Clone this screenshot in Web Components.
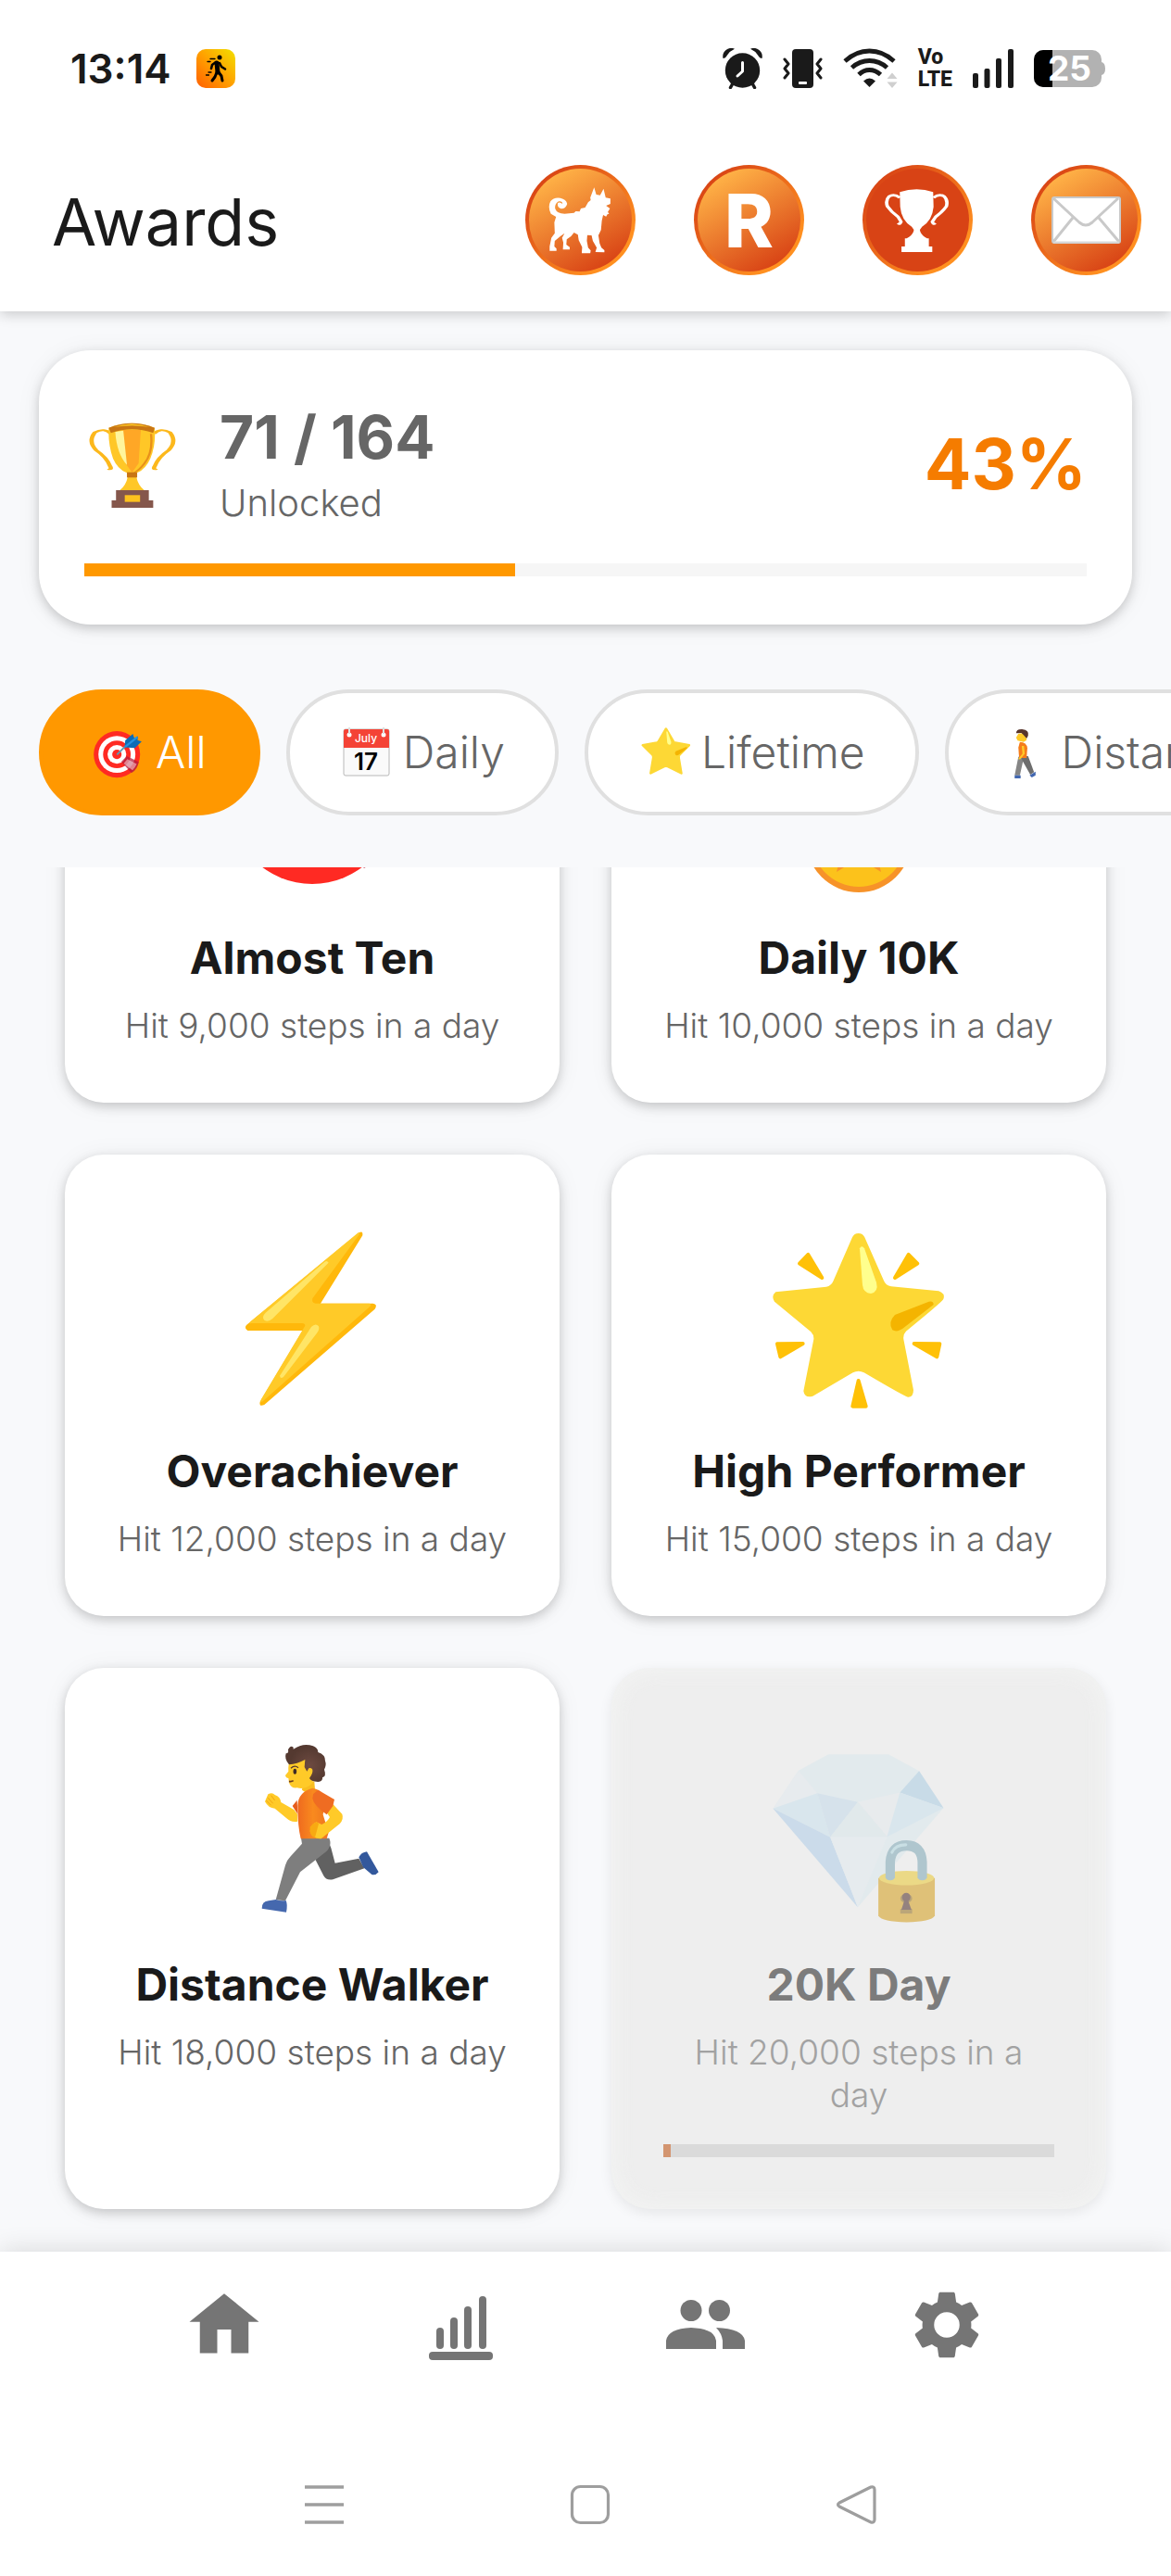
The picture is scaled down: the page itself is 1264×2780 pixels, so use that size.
<!DOCTYPE html>
<html lang="en">
<head>
<meta charset="utf-8">
<meta name="viewport" content="width=device-width, initial-scale=1">
<title>Awards</title>
<style>
    :root {
        --bg-color: #f8f9fb;
        --surface-color: #ffffff;
        --text-color: #1a1a1a;
        --text-color-light: #666666;
        --accent-color: #ff9800;
        --accent-color-dark: #f57c00;
        --line-color: #e0e0e0;
        --nav-color: #757575;
        --shadow-card: 0 4px 12px rgb(0 0 0 / 0.18), 0 2px 28px rgb(0 0 0 / 0.06);
    }

    body {
        margin: 0;
        background-color: var(--bg-color);
        color: var(--text-color);
        font-family: Inter, Roboto, "Liberation Sans", sans-serif;
    }
</style>
</head>
<body>

<template id="aw-app-template">
    <style>
        :host {
            display: flex;
            flex-direction: column;
            height: 100vh;
            overflow: hidden;
        }

        .top {
            position: relative;
            z-index: 1;
            background-color: var(--surface-color);
            box-shadow: 0 3px 14px rgb(0 0 0 / 0.2);
        }

        .head {
            padding: 42px 42px 0;
        }

        .chips {
            display: flex;
            gap: 28px;
            padding: 70px 42px 56px;
            overflow: hidden;
        }

        .scroll {
            flex: 1;
            min-height: 0;
            overflow-y: auto;
            scrollbar-width: none;
        }

        .grid {
            display: grid;
            grid-template-columns: 1fr 1fr;
            gap: 56px;
            padding: 56px 70px 46px;
        }

        .bottom {
            position: relative;
            z-index: 1;
            background-color: var(--surface-color);
            box-shadow: 0 0 28px rgb(0 0 0 / 0.14);
        }
    </style>
    <div class="top"><slot name="top"></slot></div>
    <div class="head"><slot name="summary"></slot></div>
    <div class="chips"><slot name="chip"></slot></div>
    <main class="scroll">
        <div class="grid"><slot></slot></div>
    </main>
    <div class="bottom"><slot name="bottom"></slot></div>
</template>

<template id="aw-status-template">
    <style>
        :host {
            display: flex;
            align-items: center;
            height: 148px;
            padding: 0 71px 0 76px;
        }

        time {
            font-size: 44px;
            font-weight: 600;
            margin-right: 27px;
        }

        .right {
            display: flex;
            align-items: center;
            gap: 22px;
            margin-left: auto;
        }

        .volte {
            font-family: Roboto, sans-serif;
            font-size: 23px;
            font-weight: 800;
            line-height: 24px;
        }

        .battery {
            display: grid;
            place-items: center;

            aw-icon, span {
                grid-area: 1 / 1;
            }

            span {
                z-index: 1;
                color: #fff;
                font-size: 37px;
                font-weight: 700;
                line-height: 40px;
            }
        }
    </style>
    <time>13:14</time>
    <aw-icon name="app" w="42" h="42"></aw-icon>
    <div class="right">
        <aw-icon name="alarm" w="43" h="44"></aw-icon>
        <aw-icon name="vibrate" w="43" h="44"></aw-icon>
        <aw-icon name="wifi" w="59" h="44"></aw-icon>
        <div class="volte">Vo<br>LTE</div>
        <aw-icon name="signal" w="44" h="44"></aw-icon>
        <div class="battery">
            <aw-icon name="battery" w="77" h="40"></aw-icon>
            <span>25</span>
        </div>
    </div>
</template>

<template id="aw-header-template">
    <style>
        :host {
            display: flex;
            align-items: center;
            justify-content: space-between;
            height: 179px;
            padding: 0 32px 9px 56px;
        }

        h1 {
            margin: 4px 0 0;
            font-size: 70px;
            font-weight: 400;
            line-height: 84px;
        }

        .actions {
            display: flex;
            gap: 63px;
        }
    </style>
    <h1><slot></slot></h1>
    <div class="actions"><slot name="action"></slot></div>
</template>

<template id="aw-round-button-template">
    <style>
        :host {
            display: block;
        }

        button {
            box-sizing: border-box;
            display: grid;
            place-items: center;
            width: 119px;
            height: 119px;
            padding: 0;
            border: 4px solid transparent;
            border-radius: 50%;
            background:
                linear-gradient(150deg, #ffb347 12%, #d84315 88%) padding-box,
                linear-gradient(135deg, #d84315 12%, #ff9020 80%) border-box;
            color: #fff;
            font-family: inherit;
            font-size: 80px;
            font-weight: 800;
            line-height: 80px;
        }

        :host([active]) button {
            background:
                linear-gradient(#d84315, #d84315) padding-box,
                linear-gradient(135deg, #d84315 12%, #ff9020 80%) border-box;
        }
    </style>
    <button type="button"><slot></slot></button>
</template>

<template id="aw-progress-template">
    <style>
        :host {
            display: block;
            height: 14px;
            background-color: var(--track-color, #f6f6f6);
        }

        div {
            height: 100%;
            background-color: var(--fill-color, var(--accent-color));
        }
    </style>
    <div></div>
</template>

<template id="aw-summary-template">
    <style>
        :host {
            display: block;
            padding: 56px 49px 52px;
            border-radius: 56px;
            background-color: var(--surface-color);
            box-shadow: var(--shadow-card);
        }

        .row {
            display: flex;
            align-items: center;
            gap: 42px;
            margin-bottom: 40px;
        }

        .count {
            color: var(--text-color-light);
            font-size: 64px;
            font-weight: 700;
            line-height: 76px;
        }

        .label {
            margin-top: 8px;
            color: var(--text-color-light);
            font-size: 40px;
            font-weight: 300;
            line-height: 50px;
        }

        .percent {
            margin-left: auto;
            color: var(--accent-color-dark);
            font-size: 75px;
            font-weight: 700;
            line-height: 80px;
        }
    </style>
    <div class="row">
        <aw-icon name="trophy" w="104" h="104"></aw-icon>
        <div>
            <div class="count"><slot name="count"></slot></div>
            <div class="label"><slot name="label"></slot></div>
        </div>
        <div class="percent"><slot name="percent"></slot></div>
    </div>
    <aw-progress value="43"></aw-progress>
</template>

<template id="aw-chip-template">
    <style>
        :host {
            display: block;
            flex: none;
        }

        button {
            box-sizing: border-box;
            display: flex;
            align-items: center;
            gap: 12px;
            height: 136px;
            padding: 0 54px;
            border: 4px solid var(--line-color);
            border-radius: 68px;
            background-color: var(--surface-color);
            color: var(--text-color-light);
            font-family: inherit;
            font-size: 48px;
            font-weight: 300;
            line-height: 56px;
            white-space: nowrap;
        }

        :host([selected]) button {
            border-color: var(--accent-color);
            background-color: var(--accent-color);
            color: #fff;
        }
    </style>
    <button type="button"><aw-icon w="56" h="56"></aw-icon><slot></slot></button>
</template>

<template id="aw-award-template">
    <style>
        :host {
            display: block;
            padding: 56px;
            border-radius: 42px;
            background-color: var(--surface-color);
            box-shadow: var(--shadow-card);
            text-align: center;
        }

        :host([locked]) {
            background-color: #eeeeee;
            box-shadow:
                inset 0 0 28px rgb(248 250 248 / 0.6),
                0 4px 14px rgb(0 0 0 / 0.08);
            --track-color: #dadada;
            --fill-color: #d39570;
        }

        aw-icon {
            margin: 0 auto 16px;
        }

        h2 {
            margin: 0 0 20px;
            font-size: 48px;
            font-weight: 700;
            line-height: 60px;
        }

        p {
            margin: 0 0 4px;
            color: var(--text-color-light);
            font-size: 37px;
            font-weight: 300;
            line-height: 46px;
        }

        :host([locked]) h2 {
            color: #7c7c7c;
        }

        :host([locked]) p {
            color: #a2a2a2;
        }

        article {
            display: flow-root;
        }

        aw-progress {
            margin-top: 30px;
        }
    </style>
    <article>
        <aw-icon w="240" h="240"></aw-icon>
        <h2><slot name="title"></slot></h2>
        <p><slot></slot></p>
    </article>
</template>

<template id="aw-nav-template">
    <style>
        :host {
            display: block;
        }

        nav {
            display: flex;
            justify-content: center;
            padding-bottom: 38px;
        }

        a {
            display: grid;
            place-items: center;
            width: 260px;
            height: 158px;
            color: var(--nav-color);
        }

        .system {
            display: flex;
            justify-content: center;
            padding-left: 10px;
        }

        .system button {
            display: grid;
            place-items: center;
            width: 287px;
            height: 154px;
            padding: 0;
            border: 0;
            background: none;
            color: #9e9e9e;
        }
    </style>
    <nav>
        <a href="#home" aria-label="Home"><aw-icon name="home" w="90" h="90"></aw-icon></a>
        <a href="#stats" aria-label="Stats"><aw-icon name="stats" w="90" h="90"></aw-icon></a>
        <a href="#friends" aria-label="Friends"><aw-icon name="people" w="90" h="90"></aw-icon></a>
        <a href="#settings" aria-label="Settings"><aw-icon name="settings" w="88" h="88"></aw-icon></a>
    </nav>
    <div class="system">
        <button type="button" aria-label="Recent apps"><aw-icon name="recent" w="44" h="44"></aw-icon></button>
        <button type="button" aria-label="Home screen"><aw-icon name="square" w="44" h="44"></aw-icon></button>
        <button type="button" aria-label="Back"><aw-icon name="back" w="44" h="44"></aw-icon></button>
    </div>
</template>

<aw-app>
    <aw-status slot="top"></aw-status>
    <aw-header slot="top">
        Awards
        <aw-round-button slot="action" label="Pet"><aw-icon name="dog" w="111" h="111"></aw-icon></aw-round-button>
        <aw-round-button slot="action" label="R">R</aw-round-button>
        <aw-round-button slot="action" label="Awards" active><aw-icon name="cup" w="111" h="111"></aw-icon></aw-round-button>
        <aw-round-button slot="action" label="Messages"><aw-icon name="mail" w="111" h="111"></aw-icon></aw-round-button>
    </aw-header>

    <aw-summary slot="summary">
        <span slot="count">71 / 164</span>
        <span slot="label">Unlocked</span>
        <span slot="percent">43%</span>
    </aw-summary>

    <aw-chip slot="chip" icon="target-small" selected>All</aw-chip>
    <aw-chip slot="chip" icon="calendar">Daily</aw-chip>
    <aw-chip slot="chip" icon="star">Lifetime</aw-chip>
    <aw-chip slot="chip" icon="walker">Distance</aw-chip>

    <aw-award icon="target"><span slot="title">Almost Ten</span>Hit 9,000 steps in a day</aw-award>
    <aw-award icon="medal"><span slot="title">Daily 10K</span>Hit 10,000 steps in a day</aw-award>
    <aw-award icon="bolt"><span slot="title">Overachiever</span>Hit 12,000 steps in a day</aw-award>
    <aw-award icon="glow"><span slot="title">High Performer</span>Hit 15,000 steps in a day</aw-award>
    <aw-award icon="runner"><span slot="title">Distance Walker</span>Hit 18,000 steps in a day</aw-award>
    <aw-award icon="diamond" locked progress="2"><span slot="title">20K Day</span>Hit 20,000 steps in a day</aw-award>

    <aw-nav slot="bottom"></aw-nav>
</aw-app>

<script type="module">
    const TARGET = `
        <circle cx="120" cy="117" r="89" fill="#ff2a23"/>
        <circle cx="120" cy="117" r="71" fill="#fff"/>
        <circle cx="120" cy="117" r="53" fill="#ff2a23"/>
        <circle cx="120" cy="117" r="36" fill="#fff"/>
        <circle cx="120" cy="117" r="18" fill="#ff2a23"/>
        <path d="M137 145 L158 124 L204 146 Q199 176 176 189 Z" fill="#b71c3c" opacity=".75"/>
        <path d="M146 152 L160 135 L196 154 Q190 168 180 178 Z" fill="#fff" opacity=".45"/>
        <path d="M122 116 L168 71" stroke="#5f9bb5" stroke-width="7" stroke-linecap="round"/>
        <path d="M150 90 L152 63 L181 38 L187 55 L201 47 L199 62 L215 68 L189 93 Z" fill="#0c6cb5"/>
        <path d="M152 88 L199 50" stroke="#2493e0" stroke-width="8"/>`;

    // each entry: [viewBox, markup]
    const ICONS = {
        "app": ["0 0 42 42", `
            <defs><linearGradient id="g" x1="0" y1="1" x2="1" y2="0">
                <stop stop-color="#ff5f00"/><stop offset=".5" stop-color="#ffa000"/><stop offset="1" stop-color="#f2e000"/>
            </linearGradient></defs>
            <rect width="42" height="42" rx="10" fill="url(#g)"/>
            <g stroke="#000" stroke-linecap="round" stroke-linejoin="round" fill="none">
                <circle cx="25" cy="9" r="2.500" fill="#000" stroke="none"/>
                <path d="M22 15 L23 25" stroke-width="5"/>
                <path d="M21 14 L17 17 L16 21 M25 15 L27 19 L31 21.500" stroke-width="2.600"/>
                <path d="M22 25 L20 30 L17 34 M24 25 L27 29 L28 34" stroke-width="3"/>
                <path d="M15 10.500h5M12 13.500h3M13 25h3M10.500 28h3" stroke-width="1.300"/>
            </g>`],
        "alarm": ["0 0 43 44", `
            <g fill="#1a1a1a"><circle cx="21.500" cy="24" r="18.700"/>
            <path d="M0.500 11 A9 9 0 0 1 13 .8 Q8 3 5 7.500 Q3 11 0.500 11ZM42.500 11 A9 9 0 0 0 30 .8 Q35 3 38 7.500 Q40 11 42.500 11Z"/></g>
            <path d="M11 38 L8.500 42.500 M32 38 L34.500 42.500" stroke="#1a1a1a" stroke-width="3.500" stroke-linecap="round"/>
            <path d="M21.500 15.500V25 L16 30" fill="none" stroke="#fff" stroke-width="3" stroke-linecap="round" stroke-linejoin="round"/>`],
        "vibrate": ["0 0 43 44", `
            <rect x="10" y="1" width="23" height="42" rx="4" fill="#1a1a1a"/>
            <rect x="17" y="36" width="9" height="3" rx="1" fill="#fff"/>
            <path d="M2 12 L6 17 L2 22 L6 27 L2 32 M41 12 L37 17 L41 22 L37 27 L41 32" fill="none" stroke="#1a1a1a" stroke-width="3" stroke-linecap="round" stroke-linejoin="round"/>`],
        "wifi": ["0 0 59 44", `
            <g fill="none" stroke="#1a1a1a" stroke-width="4.800">
                <path d="M2 14 Q14 3 28.500 3 Q43 3 55 14M9.500 21 Q18 13.500 28.500 13.500 Q39 13.500 47.500 21M17 28.500 Q22 23.500 28.500 23.500 Q35 23.500 40.500 28.500"/>
            </g>
            <path d="M22 35.500 Q28.500 29.500 35 35.500 L28.500 42Z" fill="#1a1a1a"/>
            <path d="M47.500 33 L53 26.500 L58.500 33ZM47.500 36.500 L53 43 L58.500 36.500Z" fill="#cfcfcf"/>`],
        "signal": ["0 0 44 44", `
            <g fill="#1a1a1a"><rect y="27" width="6" height="16" rx="2"/><rect x="12.500" y="22" width="6" height="21" rx="2"/>
            <rect x="25" y="11" width="6" height="32" rx="2"/><rect x="38" y="1" width="6" height="42" rx="2"/></g>`],
        "battery": ["0 0 77 40", `
            <defs><clipPath id="c"><rect width="73" height="40" rx="10"/></clipPath></defs>
            <g clip-path="url(#c)"><rect width="73" height="40" fill="#b2b2b2"/><rect width="20" height="40" fill="#000"/></g>
            <path d="M73 13 Q77 14 77 20 Q77 26 73 27Z" fill="#b2b2b2"/>`],
        "dog": ["8 8 111 111", `
            <path transform="translate(-22.800 -14) scale(.4617 .3333)" fill="#fff" d="M219 127 L224 150 L233 152 L241 131 L246 160 L257 163 L257 180 L247 186 L256 195 L251 206
            L254 212 L250 214 L247 221 L240 216 L237 235 L235 265 L229 282 L232 308 L236 322 L243 330 L243 337 L222 336 L225 322 L216 300 L213 282 L203 281
            L202 300 L205 322 L211 331 L210 340 L190 340 L191 320 L183 298 L181 280 L172 273 L165 285 L155 295 L154 312 L162 320 L162 328 L146 328 L147 305
            L144 290 L150 275 L140 285 L127 300 L126 318 L131 325 L131 332 L115 332 L115 318 L119 290 L127 275 L126 240 L130 222 L118 212
            Q110 190 117 172 Q124 158 140 161 Q154 165 156 180 Q153 196 142 196 Q132 192 134 178 Q138 172 145 180 Q145 170 136 172 Q126 180 128 196
            Q132 212 150 212 L172 209 L176 204 L185 205 L188 195 L198 192 L205 175 L211 168 L210 160Z"/>`],
        "cup": ["8 8 111 111", `
            <g transform="translate(-387 -14) scale(.4617 .3333)" fill="#fff">
                <path d="M934 142 Q974 124 1012 142 L1013 190 Q1010 235 986 254 L981 264 Q982 280 998 292 L1002 292 L1002 318 L1010 318 L1010 336 L938 336 L938 318 L946 318 L946 292 L950 292 Q966 280 967 264 L962 254 Q938 235 935 190Z"/>
                <path d="M934 160 Q921 146 909 156 Q900 168 905 188 Q914 206 930 222 L937 238 Q935 248 930 242 M1013 160 Q1026 146 1038 156 Q1047 168 1043 188 Q1034 206 1018 222 L1010 238 Q1012 248 1017 242" fill="none" stroke="#fff" stroke-width="8"/>
            </g>`],
        "mail": ["8 8 111 111", `
            <rect x="27" y="39" width="73" height="49" rx="2" fill="#fff" stroke="#c9c9c9" stroke-width="2"/>
            <path d="M28 40 L56 66 Q63 72 70 66 L98 40 M28 87 L49 61 M99 87 L77 61" fill="none" stroke="#c9c9c9" stroke-width="3"/>
            <path d="M28 87.500 H99" stroke="#d8d8d8" stroke-width="2"/>`],
        "trophy": ["0 0 104 104", `
            <g transform="translate(-61 -89) scale(.787 .3333)">
                <path d="M114 324 Q105 304 92 320 Q82 350 94 378 Q108 400 113 430 Q116 442 110 438 M173 324 Q182 304 195 320 Q205 350 193 378 Q179 400 174 430 Q171 442 177 438" fill="none" stroke="#fcb81c" stroke-width="6"/>
                <path d="M111 305 Q143 275 174 305 Q176 360 168 405 Q160 448 143 456 Q125 448 117 405 Q110 360 111 305Z" fill="#ffc727"/>
                <path d="M130 312 L155 312 L152 420 L143 450 L134 420Z" fill="#ffa726"/>
                <path d="M120 318 L131 314 L136 425 Q122 390 120 318Z" fill="#fff59d"/>
                <path d="M111 305 Q143 275 174 305 L172 322 Q143 298 114 322Z" fill="#c87514"/>
                <path d="M118 303 Q143 282 167 303 Q143 292 118 303Z" fill="#ffca28"/>
                <path d="M169 325 Q172 385 160 420 Q153 442 146 450" fill="none" stroke="#e8901a" stroke-width="3"/>
                <path d="M137 464 H149 Q151 490 160 508 H126 Q135 490 137 464Z" fill="#ffc727"/>
                <rect x="136" y="449" width="14" height="17" fill="#c87514"/>
                <path d="M121 507 H166 V540 H172 V564 H115 V540 H121Z" fill="#85574c"/>
                <rect x="133" y="523" width="21" height="22" fill="#fdc21e"/>
            </g>`],
        "target": ["0 0 240 240", TARGET],
        "target-small": ["27 10 199 199", TARGET],
        "calendar": ["0 0 56 56", `
            <rect x="4" y="3" width="49" height="50" rx="2" fill="#fafafa" stroke="#b8b8b8"/>
            <path d="M4 23V5q0-2 2-2h45q2 0 2 2v18z" fill="#f44336"/>
            <circle cx="10" cy="9" r="2.500" fill="#fff"/><circle cx="47" cy="9" r="2.500" fill="#fff"/>
            <path d="M10 1v7M47 1v7" stroke="#e0e0e0" stroke-width="2"/>
            <text x="28" y="17" font-size="12" font-weight="500" text-anchor="middle" fill="#fff">July</text>
            <text x="28" y="47" font-size="26" font-weight="600" text-anchor="middle" fill="#000">17</text>`],
        "star": ["14 24 198 198", `
            <g transform="translate(-7 -2) scale(.3333)">
                <path d="M380 104 L464 246 Q470 262 488 264 L646 292 L534 404 Q524 418 526 434 L556 614 L400 535 Q380 526 360 535 L204 614 L234 434 Q234 418 226 404 L114 292 L274 264 Q290 260 296 246Z" fill="#fdd835" stroke="#fdd835" stroke-width="26" stroke-linejoin="round"/>
                <path d="M384 138 Q392 130 400 142 L438 252 Q444 282 420 288 Q396 284 394 260Z" fill="#ffff8d"/>
                <path d="M492 362 L608 314 Q624 310 622 326 L530 400 Q506 418 488 402 Q474 380 492 362Z" fill="#f4b400"/>
            </g>`],
        "walker": ["0 0 56 56", `
            <g transform="translate(-1071 -64) scale(.8061 .3333)">
                <path d="M1355 290 L1350 350 H1357 L1363 285Z" fill="#858585"/>
                <path d="M1358 288 L1368 288 L1376 340 L1371 348 L1361 305Z" fill="#6d6d6d"/>
                <path d="M1350 350 H1358 V363 H1350ZM1370 350 L1378 338 L1378 350 L1373 357Z" fill="#4267b0"/>
                <path d="M1355 215 L1365 213 L1366 236 L1362 242 L1354 238 L1352 228Z" fill="#ffca28"/>
                <path d="M1357 242 Q1366 242 1367 262 L1366 294 H1356 L1355 260Z" fill="#f57c1a"/>
                <path d="M1361 255 L1362 280 L1356 298" fill="none" stroke="#ffca28" stroke-width="3"/>
                <path d="M1352 214 Q1352 200 1360 201 Q1370 204 1368 222 L1366 231 L1362 220 L1359 213Z" fill="#59362c"/>
            </g>`],
        "medal": ["0 0 240 240", `
            <path d="M62 0 H110 L132 96 L104 112Z" fill="#176cc7"/>
            <path d="M178 0 H130 L108 96 L136 112Z" fill="#2a8df0"/>
            <circle cx="120" cy="158" r="57" fill="#f79329"/>
            <circle cx="120" cy="158" r="51" fill="#fcc21b"/>
            <path d="M120 120 L131 145 L158 147 L137 165 L144 193 L120 178 L96 193 L103 165 L82 147 L109 145Z" fill="#f79329"/>`],
        "bolt": ["0 0 240 240", `
            <g transform="translate(13 -2) scale(.3333)">
                <path d="M474 90 Q486 84 484 100 L348 320 H518 Q534 322 524 338 L166 648 Q148 656 152 638 L290 408 H112 Q100 400 108 390Z" fill="#ffb80b"/>
                <path d="M470 91 Q476 88 474 96 L322 304 Q318 318 332 320 H506 Q514 322 508 330 L162 636 Q150 644 156 630 L298 392 Q298 384 288 384 H124 Q112 388 122 378Z" fill="#ffca28"/>
                <path d="M358 188 Q368 178 374 188 L192 370 Q178 382 166 374 Q156 364 170 350Z" fill="#ffe566"/>
                <path d="M318 396 Q332 382 342 394 Q346 404 336 416 L228 558 Q218 566 216 554Z" fill="#ffe566"/>
            </g>`],
        "glow": ["0 0 240 240", `
            <g transform="translate(-7 -2) scale(.3333)">
                <path d="M380 93 Q394 93 400 106 L462 246 Q468 262 486 265 L640 280 Q662 288 655 306 Q652 314 534 410 Q524 420 526 436 L558 600 Q558 624 540 623 Q532 623 398 544 Q380 534 362 544 L232 620 Q206 628 202 604 L235 436 Q236 422 226 412 L108 314 Q96 296 112 283 L276 266 Q292 262 298 248 L360 106 Q366 93 380 93Z" fill="#fdd835"/>
                <path d="M384 142 Q390 130 399 142 L438 252 Q446 282 420 288 Q396 286 393 260Z" fill="#ffff8d"/>
                <path d="M498 357 L608 314 Q624 311 623 324 L530 396 Q506 416 490 406 Q474 382 498 357Z" fill="#f4b400"/>
                <g fill="#ffc107" stroke="#ffc107" stroke-width="12" stroke-linejoin="round">
                    <path d="M217 162 L262 237 L189 191ZM542 162 L498 237 L571 191ZM117 451 L200 450 L127 493ZM643 451 L560 450 L634 493ZM380 570 L361 653 H404Z"/>
                </g>
            </g>`],
        "runner": ["0 0 240 240", `
            <defs>
                <linearGradient id="s" x1="0" x2="1"><stop stop-color="#ef6a1f"/><stop offset=".5" stop-color="#f98a1e"/><stop offset="1" stop-color="#ee741f"/></linearGradient>
                <radialGradient id="h" cx=".6" cy=".55"><stop stop-color="#6d4a41"/><stop offset="1" stop-color="#543930"/></radialGradient>
            </defs>
            <g transform="translate(33 5) scale(.3333)">
                <path d="M270 435 L312 375 L322 400 L335 449 L412 434 L430 466 L328 502 Q306 506 298 490Z" fill="#616161"/>
                <path d="M412 430 Q420 414 438 412 L476 478 Q466 490 454 486 L426 462Z" fill="#33589c"/>
                <path d="M225 368 H316 Q326 392 308 410 L222 478 L174 571 L143 568 L174 456 Q178 440 190 428 L228 386Z" fill="#7e7e7e"/>
                <path d="M143 567 Q160 573 176 570 Q182 582 177 608 L98 596 Q98 572 120 571Z" fill="#4568ae"/>
                <path d="M118 226 Q132 218 140 228 Q158 234 160 252 L202 276 L213 290 L214 314 Q192 318 178 304 L140 272 Q120 272 108 250Z" fill="#ffca28"/>
                <path d="M112 246 L128 262 M118 238 L134 256 M128 230 L140 246" stroke="#f2a413" stroke-width="3"/>
                <path d="M212 245 L197 264 L214 290Z" fill="#e65c1b"/>
                <path d="M230 190 L268 184 L270 212 L248 226 L228 212Z" fill="#f9bd20"/>
                <path d="M214 262 Q216 218 262 206 Q300 212 304 250 L296 292 L314 350 L308 370 H224 Q214 330 214 262Z" fill="url(#s)"/>
                <path d="M328 258 L358 290 Q364 306 350 322 L290 370 Q262 372 254 346 Q256 324 274 316 L292 324 Q312 314 318 300 L306 282Z" fill="#ffca28"/>
                <path d="M254 332 Q262 320 276 316 L282 322 L270 366 Q256 362 254 346Z" fill="#f8a912"/>
                <path d="M264 226 L280 212 L333 243 L328 264 L308 292 Q266 262 262 240Z" fill="#ef6c22"/>
                <path d="M190 112 Q182 134 184 152 L174 165 Q176 174 184 174 L186 188 Q192 208 212 205 Q240 212 262 190 L276 130 L248 96 L200 98Z" fill="#ffca28"/>
                <path d="M186 130 Q170 112 176 94 Q186 94 183 82 Q190 66 200 74 L200 80 Q232 58 264 70 Q280 76 280 90 Q304 98 303 118 Q308 132 300 146 Q308 168 294 172 Q296 184 280 186 Q256 184 252 174 Q264 158 262 146 Q258 138 250 142 L244 152 L236 138 L238 114 Q212 128 186 130Z" fill="url(#h)"/>
                <ellipse cx="205" cy="152" rx="5.500" ry="9" fill="#3e2b26"/>
                <path d="M192 142 Q204 130 216 140" fill="none" stroke="#543930" stroke-width="4"/>
                <path d="M186 184 Q194 186 200 182" fill="none" stroke="#6d3a20" stroke-width="5"/>
            </g>`],
        "diamond": ["0 0 240 240", `
            <g transform="translate(-167 -75) scale(.3762 .4082)">
                <path d="M517 418 L590 318 L676 275 H848 L936 319 L1006 417 L760 679Z" fill="#e2eaed"/>
                <path d="M517 418 L590 318 L644 378Z" fill="#e7ebee"/>
                <path d="M517 418 L644 378 L681 494Z" fill="#d9e6ed"/>
                <path d="M644 378 L760 401 L681 494Z" fill="#d6e2eb"/>
                <path d="M760 401 L881 376 L844 493Z" fill="#e8ebed"/>
                <path d="M760 401 L844 493 H681Z" fill="#e1e9eb"/>
                <path d="M936 319 L1006 417 L881 376Z" fill="#c8dbe7"/>
                <path d="M881 376 L1006 417 L844 493Z" fill="#d9e6ed"/>
                <path d="M517 418 L681 494 L760 679Z" fill="#cbdbea"/>
                <path d="M681 494 H844 L760 679Z" fill="#e6ebee"/>
                <path d="M819 602 V702 Q830 718 900 719 Q970 718 981 702 V602Z" fill="#dfc178"/>
                <ellipse cx="900" cy="602" rx="79" ry="19" fill="#ebd986"/>
                <path d="M853 602 V560 Q856 516 900 516 Q943 516 945 560 V602" fill="none" stroke="#afc6ce" stroke-width="27"/>
                <path d="M840 600 h26 q-2 8-13 8 t-13-8zM932 600 h26 q-2 8-13 8 t-13-8z" fill="#afc6ce"/>
                <path d="M858 534 Q868 514 898 514" fill="none" stroke="#c9dfe4" stroke-width="8" stroke-linecap="round"/>
                <path d="M882 684 h34 v12 h-34z" fill="#bba679"/>
                <ellipse cx="899" cy="656" rx="17" ry="12" fill="#bba679"/>
                <circle cx="899" cy="653" r="12" fill="#94827f"/>
                <path d="M894 660 H904 L914 686 H885Z" fill="#94827f"/>
            </g>`],
        "home": ["0 0 24 24", `<path d="M10 20.100v-6.800h4v6.800h5v-9h3L12 3 2 11.100h3v9z" fill="currentColor"/>`],
        "stats": ["0 0 90 90", `
            <g fill="currentColor"><rect x="14" y="48" width="8" height="23" rx="4"/><rect x="29" y="37" width="8" height="34" rx="4"/>
            <rect x="44" y="25" width="8" height="46" rx="4"/><rect x="60" y="14" width="8" height="57" rx="4"/><rect x="6" y="74" width="69" height="9" rx="4"/></g>`],
        "people": ["0 0 90 90", `
            <g fill="currentColor"><circle cx="29" cy="29.500" r="11.500"/><circle cx="59.500" cy="29.500" r="11.500"/>
            <path d="M2 71V62 Q4 49 29 48 Q54 49 56 62V71ZM56 48 Q85 49 87 62V71H63V62 Q62 54 56 48Z"/></g>`],
        "settings": ["0 0 24 24", `<path fill="currentColor" d="M19.140 12.940c.04-.3.06-.61.06-.94 0-.32-.02-.64-.07-.94l2.030-1.580c.18-.14.23-.41.12-.61l-1.920-3.320c-.12-.22-.37-.29-.59-.22l-2.390.96c-.5-.38-1.030-.7-1.620-.94l-.36-2.540c-.04-.24-.24-.41-.48-.41h-3.840c-.24 0-.43.17-.47.41l-.36 2.540c-.59.24-1.130.57-1.620.94l-2.390-.96c-.22-.08-.47 0-.59.22L2.740 8.870c-.12.21-.08.47.12.61l2.030 1.580c-.05.3-.09.63-.09.94s.02.64.07.94l-2.030 1.580c-.18.14-.23.41-.12.61l1.920 3.320c.12.22.37.29.59.22l2.390-.96c.5.38 1.030.7 1.620.94l.36 2.540c.05.24.24.41.48.41h3.840c.24 0 .44-.17.47-.41l.36-2.540c.59-.24 1.130-.56 1.620-.94l2.390.96c.22.08.47 0 .59-.22l1.920-3.320c.12-.22.07-.47-.12-.61l-2.010-1.580zM12 15.750a3.750 3.750 0 1 1 0-7.500 3.750 3.750 0 0 1 0 7.500z"/>`],
        "recent": ["0 0 44 44", `<path d="M1 3h42M1 22h42M1 41h42" stroke="currentColor" stroke-width="3.500"/>`],
        "square": ["0 0 44 44", `<rect x="2.500" y="2.500" width="39" height="39" rx="9" fill="none" stroke="currentColor" stroke-width="3.200"/>`],
        "back": ["0 0 44 44", `<path d="M38 3 L4 20 Q1 22 4 24 L38 41 Q42 42 42 38 V6 Q42 2 38 3Z" fill="none" stroke="currentColor" stroke-width="3.200"/>`],
    };

    const attach = (element, name) => {
        const clone = document.getElementById(`${name}-template`).content.cloneNode(true);
        element.attachShadow({ mode: "open" }).append(clone);
        return element.shadowRoot;
    };

    customElements.define(
        "aw-icon",
        class extends HTMLElement {
            static observedAttributes = ["name"];

            constructor() {
                super();
                this.attachShadow({ mode: "open" });
            }

            connectedCallback() { this.render(); }
            attributeChangedCallback() { this.render(); }

            render() {
                const icon = ICONS[this.getAttribute("name")];
                if (!icon) return;
                const w = this.getAttribute("w");
                const h = this.getAttribute("h");
                this.shadowRoot.innerHTML = `
                    <style>
                        :host { display: block; flex: none; width: ${w}px; height: ${h}px; }
                        svg { display: block; width: 100%; height: 100%; }
                    </style>
                    <svg viewBox="${icon[0]}" aria-hidden="true">${icon[1]}</svg>`;
            }
        },
    );

    customElements.define(
        "aw-progress",
        class extends HTMLElement {
            connectedCallback() {
                const root = attach(this, "aw-progress");
                const value = this.getAttribute("value");
                this.setAttribute("role", "progressbar");
                this.setAttribute("aria-valuenow", value);
                root.querySelector("div").style.width = `${value}%`;
            }
        },
    );

    customElements.define(
        "aw-round-button",
        class extends HTMLElement {
            connectedCallback() {
                const root = attach(this, "aw-round-button");
                root.querySelector("button").setAttribute("aria-label", this.getAttribute("label"));
            }
        },
    );

    customElements.define(
        "aw-chip",
        class extends HTMLElement {
            connectedCallback() {
                const root = attach(this, "aw-chip");
                root.querySelector("aw-icon").setAttribute("name", this.getAttribute("icon"));
                root.querySelector("button").setAttribute("aria-pressed", this.hasAttribute("selected"));
            }
        },
    );

    customElements.define(
        "aw-award",
        class extends HTMLElement {
            connectedCallback() {
                const root = attach(this, "aw-award");
                root.querySelector("aw-icon").setAttribute("name", this.getAttribute("icon"));

                if (this.hasAttribute("progress")) {
                    const progress = document.createElement("aw-progress");
                    progress.setAttribute("value", this.getAttribute("progress"));
                    root.querySelector("article").append(progress);
                }
            }
        },
    );

    for (const name of ["aw-status", "aw-header", "aw-summary", "aw-nav"]) {
        customElements.define(
            name,
            class extends HTMLElement {
                constructor() {
                    super();
                    attach(this, name);
                }
            },
        );
    }

    customElements.define(
        "aw-app",
        class extends HTMLElement {
            connectedCallback() {
                const scroll = attach(this, "aw-app").querySelector(".scroll");
                scroll.scrollTop = scroll.scrollHeight;
            }
        },
    );
</script>
</body>
</html>
